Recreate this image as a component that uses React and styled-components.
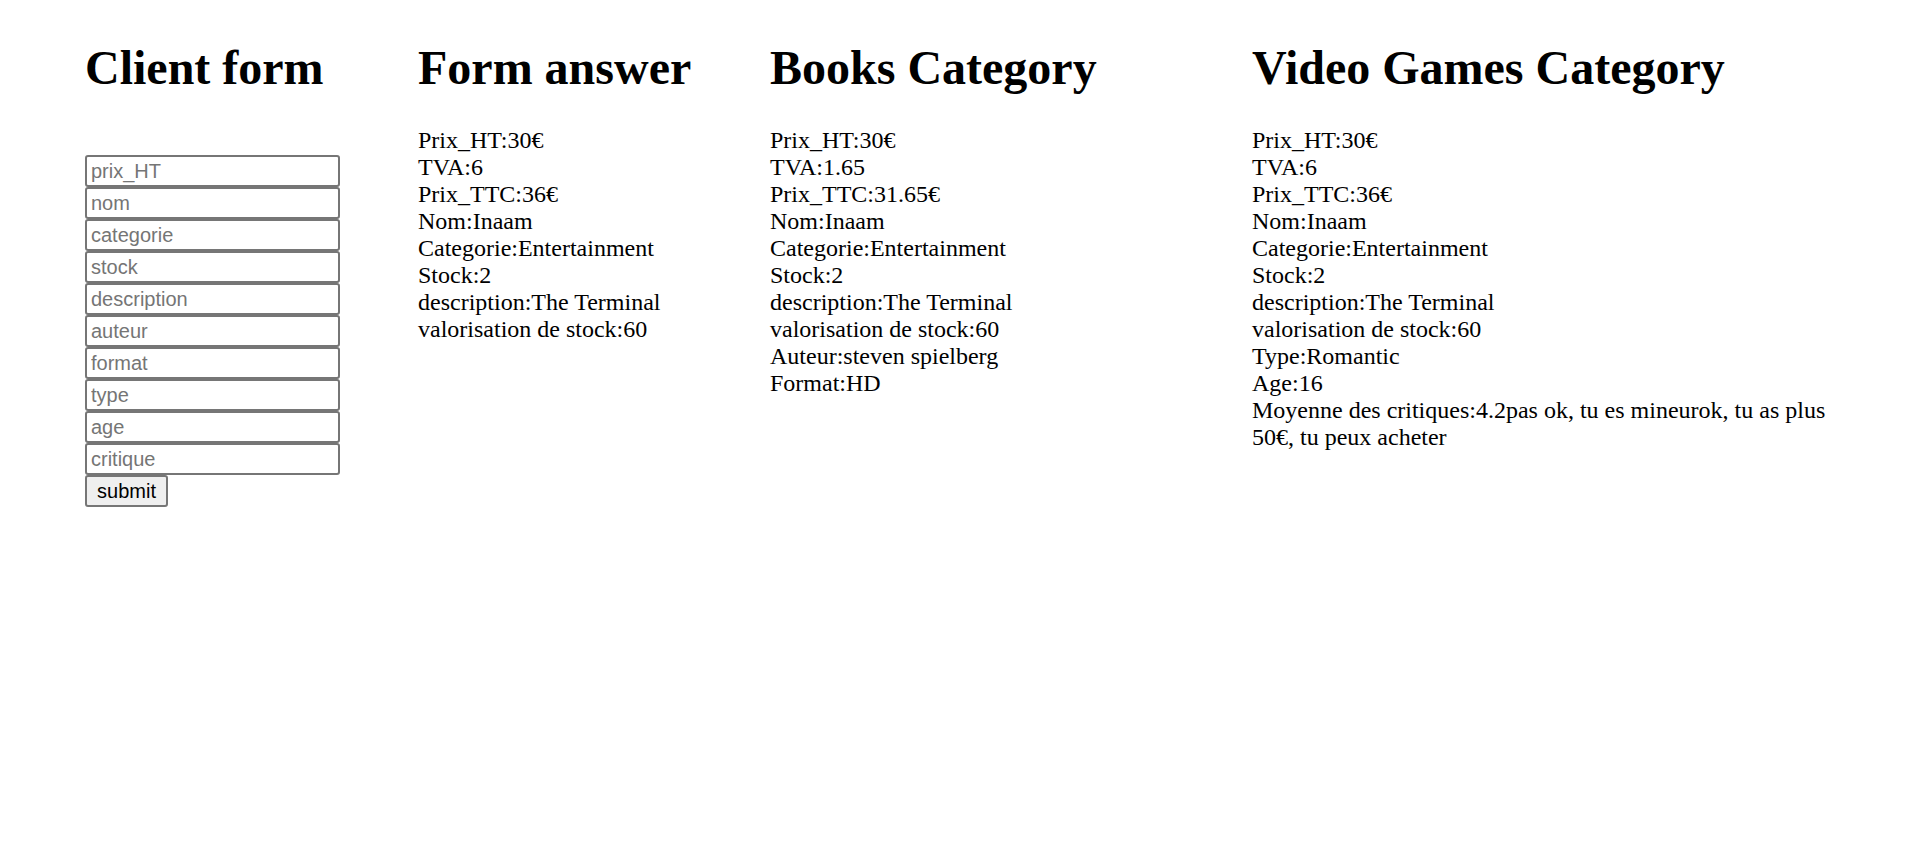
import React from "react";
import styled, { createGlobalStyle } from "styled-components";

const GlobalStyle = createGlobalStyle`
  body {
    margin: 8px;
    background: #fff;
    color: #000;
    font-family: "Liberation Serif", "Times New Roman", serif;
    font-size: 24px;
    line-height: 27px;
  }
`;

const Page = styled.div`
  display: grid;
  grid-template-columns: 333px 352px 482px 598px;
  align-items: start;
  padding-left: 77px;
`;

const Column = styled.div`
  display: flex;
  flex-direction: column;
`;

const Title = styled.h1`
  font-size: 48px;
  line-height: 55px;
  font-weight: bold;
  margin: 32px 0;
  white-space: nowrap;
`;

const Form = styled.form`
  display: flex;
  flex-direction: column;
  align-items: flex-start;
  padding-top: 28px;
`;

const Input = styled.input`
  display: block;
  box-sizing: border-box;
  width: 255px;
  height: 32px;
  margin: 0;
  padding: 1px 4px;
  border: 2px solid #767676;
  border-radius: 3px;
  font-family: "Liberation Sans", Arial, sans-serif;
  font-size: 20px;
  color: #000;
  background: #fff;

  &::placeholder {
    color: #757575;
  }
`;

const Submit = styled.button`
  box-sizing: border-box;
  width: 83px;
  height: 32px;
  margin: 0;
  padding: 1px 9px;
  border: 2px solid #767676;
  border-radius: 3px;
  background: #efefef;
  color: #000;
  font-family: "Liberation Sans", Arial, sans-serif;
  font-size: 20px;
`;

const Line = styled.div`
  line-height: 27px;
`;

const fields = [
  "prix_HT",
  "nom",
  "categorie",
  "stock",
  "description",
  "auteur",
  "format",
  "type",
  "age",
  "critique",
];

const base = [
  "Nom:Inaam",
  "Categorie:Entertainment",
  "Stock:2",
  "description:The Terminal",
  "valorisation de stock:60",
];

const answer = ["Prix_HT:30€", "TVA:6", "Prix_TTC:36€", ...base];

const books = [
  "Prix_HT:30€",
  "TVA:1.65",
  "Prix_TTC:31.65€",
  ...base,
  "Auteur:steven spielberg",
  "Format:HD",
];

const games = [
  "Prix_HT:30€",
  "TVA:6",
  "Prix_TTC:36€",
  ...base,
  "Type:Romantic",
  "Age:16",
  "Moyenne des critiques:4.2pas ok, tu es mineurok, tu as plus 50€, tu peux acheter",
];

const Block = ({ title, lines }) => (
  <Column>
    <Title>{title}</Title>
    {lines.map((l, i) => (
      <Line key={i}>{l}</Line>
    ))}
  </Column>
);

const App = () => {
  return (
    <>
      <GlobalStyle />
      <Page>
        <Column>
          <Title>Client form</Title>
          <Form onSubmit={(e) => e.preventDefault()}>
            {fields.map((f) => (
              <Input key={f} type="text" placeholder={f} />
            ))}
            <Submit type="submit">submit</Submit>
          </Form>
        </Column>
        <Block title="Form answer" lines={answer} />
        <Block title="Books Category" lines={books} />
        <Block title="Video Games Category" lines={games} />
      </Page>
    </>
  );
};

export default App;
